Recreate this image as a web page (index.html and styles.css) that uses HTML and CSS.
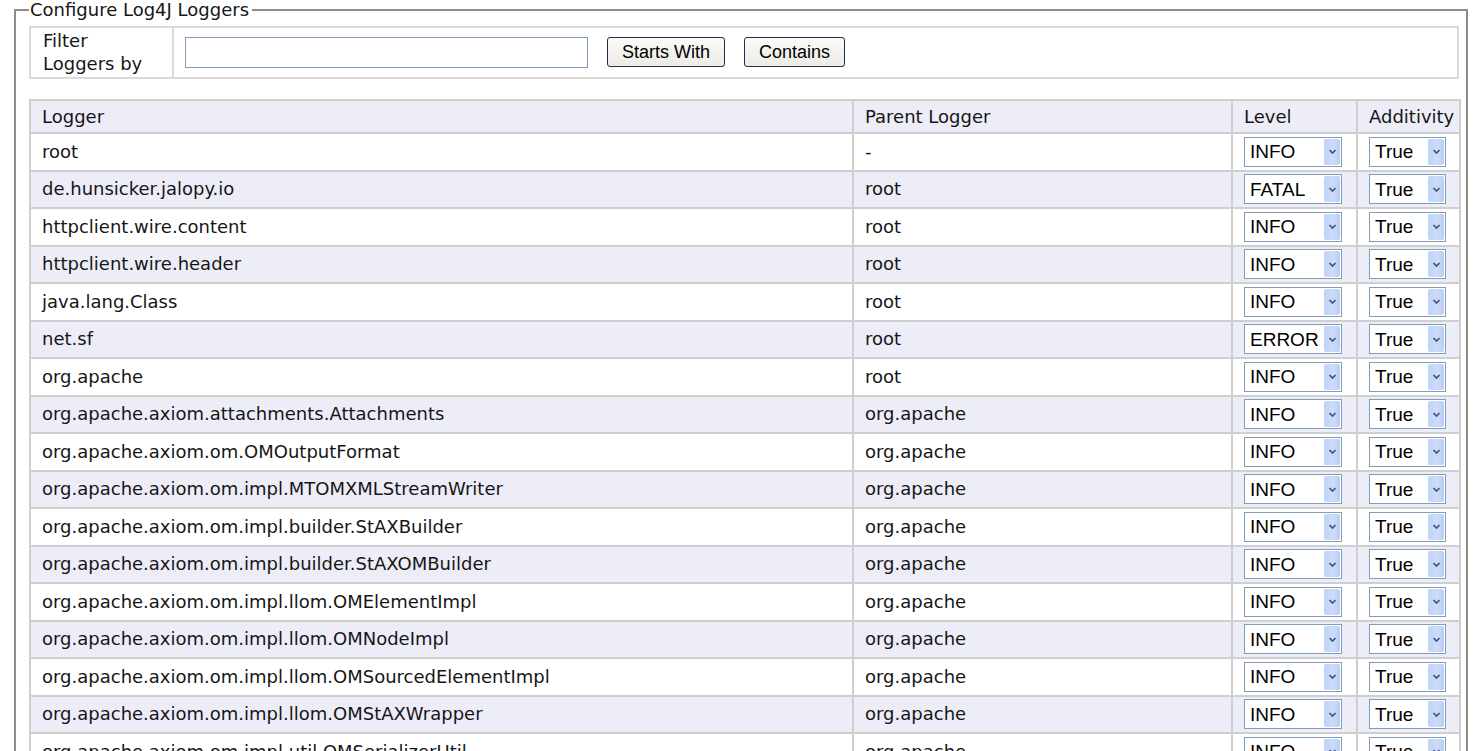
FILE: index.html
```html
<!DOCTYPE html>
<html>
<head>
<meta charset="utf-8">
<title>Configure Log4J Loggers</title>
<link rel="stylesheet" href="styles.css">
</head>
<body>
<fieldset class="box">
  <legend class="box-title">Configure Log4J Loggers</legend>
  <table class="filter">
    <tr>
      <td class="filter-label">Filter Loggers by</td>
      <td class="filter-controls">
        <div class="filter-row">
          <input type="text" class="filter-input">
          <button class="btn">Starts With</button>
          <button class="btn">Contains</button>
        </div>
      </td>
    </tr>
  </table>
  <table class="loggers">
    <colgroup>
      <col class="c-logger"><col class="c-parent"><col class="c-level"><col class="c-add">
    </colgroup>
    <thead>
      <tr class="head"><td>Logger</td><td>Parent Logger</td><td>Level</td><td>Additivity</td></tr>
    </thead>
    <tbody>
      <tr><td>root</td><td>-</td><td><span class="sel lvl"><select><option>INFO</option></select><span class="arr"><svg width="9" height="7" viewBox="0 0 9 7"><path d="M1.5 2 L4.5 5 L7.5 2" fill="none" stroke="#3f5580" stroke-width="1.7"/></svg></span></span></td><td><span class="sel add"><select><option>True</option></select><span class="arr"><svg width="9" height="7" viewBox="0 0 9 7"><path d="M1.5 2 L4.5 5 L7.5 2" fill="none" stroke="#3f5580" stroke-width="1.7"/></svg></span></span></td></tr>
      <tr><td>de.hunsicker.jalopy.io</td><td>root</td><td><span class="sel lvl"><select><option>FATAL</option></select><span class="arr"><svg width="9" height="7" viewBox="0 0 9 7"><path d="M1.5 2 L4.5 5 L7.5 2" fill="none" stroke="#3f5580" stroke-width="1.7"/></svg></span></span></td><td><span class="sel add"><select><option>True</option></select><span class="arr"><svg width="9" height="7" viewBox="0 0 9 7"><path d="M1.5 2 L4.5 5 L7.5 2" fill="none" stroke="#3f5580" stroke-width="1.7"/></svg></span></span></td></tr>
      <tr><td>httpclient.wire.content</td><td>root</td><td><span class="sel lvl"><select><option>INFO</option></select><span class="arr"><svg width="9" height="7" viewBox="0 0 9 7"><path d="M1.5 2 L4.5 5 L7.5 2" fill="none" stroke="#3f5580" stroke-width="1.7"/></svg></span></span></td><td><span class="sel add"><select><option>True</option></select><span class="arr"><svg width="9" height="7" viewBox="0 0 9 7"><path d="M1.5 2 L4.5 5 L7.5 2" fill="none" stroke="#3f5580" stroke-width="1.7"/></svg></span></span></td></tr>
      <tr><td>httpclient.wire.header</td><td>root</td><td><span class="sel lvl"><select><option>INFO</option></select><span class="arr"><svg width="9" height="7" viewBox="0 0 9 7"><path d="M1.5 2 L4.5 5 L7.5 2" fill="none" stroke="#3f5580" stroke-width="1.7"/></svg></span></span></td><td><span class="sel add"><select><option>True</option></select><span class="arr"><svg width="9" height="7" viewBox="0 0 9 7"><path d="M1.5 2 L4.5 5 L7.5 2" fill="none" stroke="#3f5580" stroke-width="1.7"/></svg></span></span></td></tr>
      <tr><td>java.lang.Class</td><td>root</td><td><span class="sel lvl"><select><option>INFO</option></select><span class="arr"><svg width="9" height="7" viewBox="0 0 9 7"><path d="M1.5 2 L4.5 5 L7.5 2" fill="none" stroke="#3f5580" stroke-width="1.7"/></svg></span></span></td><td><span class="sel add"><select><option>True</option></select><span class="arr"><svg width="9" height="7" viewBox="0 0 9 7"><path d="M1.5 2 L4.5 5 L7.5 2" fill="none" stroke="#3f5580" stroke-width="1.7"/></svg></span></span></td></tr>
      <tr><td>net.sf</td><td>root</td><td><span class="sel lvl"><select><option>ERROR</option></select><span class="arr"><svg width="9" height="7" viewBox="0 0 9 7"><path d="M1.5 2 L4.5 5 L7.5 2" fill="none" stroke="#3f5580" stroke-width="1.7"/></svg></span></span></td><td><span class="sel add"><select><option>True</option></select><span class="arr"><svg width="9" height="7" viewBox="0 0 9 7"><path d="M1.5 2 L4.5 5 L7.5 2" fill="none" stroke="#3f5580" stroke-width="1.7"/></svg></span></span></td></tr>
      <tr><td>org.apache</td><td>root</td><td><span class="sel lvl"><select><option>INFO</option></select><span class="arr"><svg width="9" height="7" viewBox="0 0 9 7"><path d="M1.5 2 L4.5 5 L7.5 2" fill="none" stroke="#3f5580" stroke-width="1.7"/></svg></span></span></td><td><span class="sel add"><select><option>True</option></select><span class="arr"><svg width="9" height="7" viewBox="0 0 9 7"><path d="M1.5 2 L4.5 5 L7.5 2" fill="none" stroke="#3f5580" stroke-width="1.7"/></svg></span></span></td></tr>
      <tr><td>org.apache.axiom.attachments.Attachments</td><td>org.apache</td><td><span class="sel lvl"><select><option>INFO</option></select><span class="arr"><svg width="9" height="7" viewBox="0 0 9 7"><path d="M1.5 2 L4.5 5 L7.5 2" fill="none" stroke="#3f5580" stroke-width="1.7"/></svg></span></span></td><td><span class="sel add"><select><option>True</option></select><span class="arr"><svg width="9" height="7" viewBox="0 0 9 7"><path d="M1.5 2 L4.5 5 L7.5 2" fill="none" stroke="#3f5580" stroke-width="1.7"/></svg></span></span></td></tr>
      <tr><td>org.apache.axiom.om.OMOutputFormat</td><td>org.apache</td><td><span class="sel lvl"><select><option>INFO</option></select><span class="arr"><svg width="9" height="7" viewBox="0 0 9 7"><path d="M1.5 2 L4.5 5 L7.5 2" fill="none" stroke="#3f5580" stroke-width="1.7"/></svg></span></span></td><td><span class="sel add"><select><option>True</option></select><span class="arr"><svg width="9" height="7" viewBox="0 0 9 7"><path d="M1.5 2 L4.5 5 L7.5 2" fill="none" stroke="#3f5580" stroke-width="1.7"/></svg></span></span></td></tr>
      <tr><td>org.apache.axiom.om.impl.MTOMXMLStreamWriter</td><td>org.apache</td><td><span class="sel lvl"><select><option>INFO</option></select><span class="arr"><svg width="9" height="7" viewBox="0 0 9 7"><path d="M1.5 2 L4.5 5 L7.5 2" fill="none" stroke="#3f5580" stroke-width="1.7"/></svg></span></span></td><td><span class="sel add"><select><option>True</option></select><span class="arr"><svg width="9" height="7" viewBox="0 0 9 7"><path d="M1.5 2 L4.5 5 L7.5 2" fill="none" stroke="#3f5580" stroke-width="1.7"/></svg></span></span></td></tr>
      <tr><td>org.apache.axiom.om.impl.builder.StAXBuilder</td><td>org.apache</td><td><span class="sel lvl"><select><option>INFO</option></select><span class="arr"><svg width="9" height="7" viewBox="0 0 9 7"><path d="M1.5 2 L4.5 5 L7.5 2" fill="none" stroke="#3f5580" stroke-width="1.7"/></svg></span></span></td><td><span class="sel add"><select><option>True</option></select><span class="arr"><svg width="9" height="7" viewBox="0 0 9 7"><path d="M1.5 2 L4.5 5 L7.5 2" fill="none" stroke="#3f5580" stroke-width="1.7"/></svg></span></span></td></tr>
      <tr><td>org.apache.axiom.om.impl.builder.StAXOMBuilder</td><td>org.apache</td><td><span class="sel lvl"><select><option>INFO</option></select><span class="arr"><svg width="9" height="7" viewBox="0 0 9 7"><path d="M1.5 2 L4.5 5 L7.5 2" fill="none" stroke="#3f5580" stroke-width="1.7"/></svg></span></span></td><td><span class="sel add"><select><option>True</option></select><span class="arr"><svg width="9" height="7" viewBox="0 0 9 7"><path d="M1.5 2 L4.5 5 L7.5 2" fill="none" stroke="#3f5580" stroke-width="1.7"/></svg></span></span></td></tr>
      <tr><td>org.apache.axiom.om.impl.llom.OMElementImpl</td><td>org.apache</td><td><span class="sel lvl"><select><option>INFO</option></select><span class="arr"><svg width="9" height="7" viewBox="0 0 9 7"><path d="M1.5 2 L4.5 5 L7.5 2" fill="none" stroke="#3f5580" stroke-width="1.7"/></svg></span></span></td><td><span class="sel add"><select><option>True</option></select><span class="arr"><svg width="9" height="7" viewBox="0 0 9 7"><path d="M1.5 2 L4.5 5 L7.5 2" fill="none" stroke="#3f5580" stroke-width="1.7"/></svg></span></span></td></tr>
      <tr><td>org.apache.axiom.om.impl.llom.OMNodeImpl</td><td>org.apache</td><td><span class="sel lvl"><select><option>INFO</option></select><span class="arr"><svg width="9" height="7" viewBox="0 0 9 7"><path d="M1.5 2 L4.5 5 L7.5 2" fill="none" stroke="#3f5580" stroke-width="1.7"/></svg></span></span></td><td><span class="sel add"><select><option>True</option></select><span class="arr"><svg width="9" height="7" viewBox="0 0 9 7"><path d="M1.5 2 L4.5 5 L7.5 2" fill="none" stroke="#3f5580" stroke-width="1.7"/></svg></span></span></td></tr>
      <tr><td>org.apache.axiom.om.impl.llom.OMSourcedElementImpl</td><td>org.apache</td><td><span class="sel lvl"><select><option>INFO</option></select><span class="arr"><svg width="9" height="7" viewBox="0 0 9 7"><path d="M1.5 2 L4.5 5 L7.5 2" fill="none" stroke="#3f5580" stroke-width="1.7"/></svg></span></span></td><td><span class="sel add"><select><option>True</option></select><span class="arr"><svg width="9" height="7" viewBox="0 0 9 7"><path d="M1.5 2 L4.5 5 L7.5 2" fill="none" stroke="#3f5580" stroke-width="1.7"/></svg></span></span></td></tr>
      <tr><td>org.apache.axiom.om.impl.llom.OMStAXWrapper</td><td>org.apache</td><td><span class="sel lvl"><select><option>INFO</option></select><span class="arr"><svg width="9" height="7" viewBox="0 0 9 7"><path d="M1.5 2 L4.5 5 L7.5 2" fill="none" stroke="#3f5580" stroke-width="1.7"/></svg></span></span></td><td><span class="sel add"><select><option>True</option></select><span class="arr"><svg width="9" height="7" viewBox="0 0 9 7"><path d="M1.5 2 L4.5 5 L7.5 2" fill="none" stroke="#3f5580" stroke-width="1.7"/></svg></span></span></td></tr>
      <tr><td>org.apache.axiom.om.impl.util.OMSerializerUtil</td><td>org.apache</td><td><span class="sel lvl"><select><option>INFO</option></select><span class="arr"><svg width="9" height="7" viewBox="0 0 9 7"><path d="M1.5 2 L4.5 5 L7.5 2" fill="none" stroke="#3f5580" stroke-width="1.7"/></svg></span></span></td><td><span class="sel add"><select><option>True</option></select><span class="arr"><svg width="9" height="7" viewBox="0 0 9 7"><path d="M1.5 2 L4.5 5 L7.5 2" fill="none" stroke="#3f5580" stroke-width="1.7"/></svg></span></span></td></tr>
    </tbody>
  </table>
</fieldset>
</body>
</html>
```
FILE: styles.css
```css
html, body {
  margin: 0;
  padding: 0;
  background: #ffffff;
}
body {
  font-family: "DejaVu Sans", Verdana, sans-serif;
  font-size: 18px;
  color: #161616;
}
.box {
  margin: 0 10px 0 14px;
  padding: 0 6px 10px 13px;
  border: 2px solid #8e8e88;
  min-width: 0;
}
.box-title {
  padding: 0 3px 0 1px;
  line-height: 20px;
  font-size: 18px;
}
.filter {
  margin-top: 6px;
  width: 1430px;
  border-collapse: collapse;
}
.filter td {
  border: 2px solid #dadada;
  line-height: 23px;
  padding: 1px 12px 2px;
  vertical-align: middle;
}
.filter-label {
  width: 117px;
}
.filter-row {
  display: flex;
  align-items: center;
}
.filter-input {
  width: 403px;
  height: 31px;
  box-sizing: border-box;
  border: 1px solid #7f9db9;
  margin: 0 19px 0 -1px;
  padding: 0 4px;
  font: 18px "Liberation Sans", Arial, sans-serif;
}
.btn {
  height: 30px;
  box-sizing: border-box;
  border: 1px solid #1c3150;
  border-radius: 3px;
  background: linear-gradient(#fbfbf8, #ecebe5);
  font: 18px "Liberation Sans", Arial, sans-serif;
  color: #000;
  padding: 0 14px;
  margin-right: 19px;
  line-height: 26px;
}
.loggers {
  margin-top: 20px;
  width: 1430px;
  border-collapse: collapse;
  table-layout: fixed;
}
.c-logger { width: 823px; }
.c-parent { width: 379px; }
.c-level { width: 125px; }
.c-add { width: 103px; }
.loggers td {
  border: 2px solid #cfcfcf;
  padding: 0 11px;
  height: 37.5px;
  box-sizing: border-box;
  vertical-align: middle;
  white-space: nowrap;
  line-height: 22px;
}
.loggers .head td {
  height: 33px;
  background: #ededf8;
}
.loggers tbody tr:nth-child(even) td {
  background: #ededf8;
}
.sel {
  position: relative;
  display: inline-block;
  vertical-align: middle;
}
.sel select {
  -webkit-appearance: none;
  appearance: none;
  height: 30px;
  box-sizing: border-box;
  border: 1px solid #7f9db9;
  border-radius: 0;
  background: #fff;
  font: 19px "Liberation Sans", Arial, sans-serif;
  color: #000;
  padding: 0 0 0 5px;
  margin: 0;
  display: block;
}
.lvl select { width: 98px; }
.add select { width: 77px; }
.arr {
  position: absolute;
  right: 2px;
  top: 2px;
  bottom: 2px;
  width: 16px;
  border-radius: 2px;
  background: linear-gradient(90deg, #bfd2f7, #cddcf9 60%, #b8ccf2);
  display: flex;
  align-items: center;
  justify-content: center;
  pointer-events: none;
}
```
